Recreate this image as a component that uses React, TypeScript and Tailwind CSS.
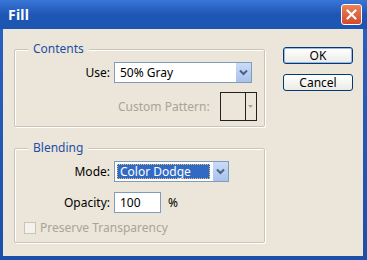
import React from "react";

const font = { fontFamily: "'Noto Sans', 'DejaVu Sans', sans-serif" };

function Chevron() {
  return (
    <svg width="9" height="7" viewBox="0 0 9 7">
      <path d="M1 1.5 L4.5 5 L8 1.5" stroke="#4d6185" strokeWidth="2" fill="none" />
    </svg>
  );
}

function DropBtn() {
  return (
    <div className="w-[16px] h-full flex items-center justify-center bg-gradient-to-b from-[#c9dbf7] to-[#a9c2ec] border-l border-white">
      <Chevron />
    </div>
  );
}

export default function App() {
  return (
    <div
      className="w-[367px] h-[260px] flex flex-col bg-gradient-to-b from-[#2a62c4] to-[#1d4fa8] overflow-hidden text-[12px] text-black"
      style={font}
    >
      {/* Title bar */}
      <div className="h-[29px] flex items-center justify-between pl-[8px] pr-[5px] bg-gradient-to-b from-[#3a76d8] via-[#1e56b4] to-[#1c55b2]">
        <span className="text-white font-bold text-[14px] leading-none tracking-[0.2px]">Fill</span>
        <div className="w-[21px] h-[21px] rounded-[3px] border border-white bg-gradient-to-b from-[#e8835a] to-[#d4472a] flex items-center justify-center">
          <svg width="11" height="11" viewBox="0 0 11 11">
            <path d="M1.5 1.5 L9.5 9.5 M9.5 1.5 L1.5 9.5" stroke="white" strokeWidth="2.2" strokeLinecap="round" />
          </svg>
        </div>
      </div>

      {/* Body */}
      <div className="flex-1 ml-[3px] mr-[4px] mb-[4px] bg-[#ebe6d9] flex pl-[11px] pt-[20px]">
        {/* Left column */}
        <div className="w-[251px] flex flex-col">
          {/* Contents group */}
          <div className="relative h-[78px] border border-[#c9c5b8] shadow-[inset_1px_1px_0_#fff,1px_1px_0_#fff] rounded-[2px]">
            <span className="absolute -top-[9px] left-[13px] px-[5px] bg-[#ebe6d9] text-[#1f4ea6] leading-[16px]">Contents</span>
            <div className="flex items-center mt-[12px]">
              <span className="w-[99px] text-right pr-[4px] leading-none">Use:</span>
              <div className="w-[138px] h-[21px] border border-[#7f9db9] bg-white flex items-center">
                <span className="flex-1 pl-[5px] leading-none">50% Gray</span>
                <DropBtn />
              </div>
            </div>
            <div className="flex items-center mt-[9px] ml-[103px]">
              <span className="text-[#a8a499] leading-none">Custom Pattern:</span>
              <div className="ml-[10px] w-[37px] h-[29px] border border-[#222] flex">
                <div className="flex-1" />
                <div className="w-[11px] border-l border-[#222] flex items-center justify-center">
                  <svg width="5" height="3" viewBox="0 0 5 3"><path d="M0 0 L5 0 L2.5 3 Z" fill="#a8a499" /></svg>
                </div>
              </div>
            </div>
          </div>

          {/* Blending group */}
          <div className="relative mt-[21px] h-[95px] border border-[#c9c5b8] shadow-[inset_1px_1px_0_#fff,1px_1px_0_#fff] rounded-[2px]">
            <span className="absolute -top-[9px] left-[13px] px-[5px] bg-[#ebe6d9] text-[#1f4ea6] leading-[16px]">Blending</span>
            <div className="flex items-center mt-[12px]">
              <span className="w-[99px] text-right pr-[4px] leading-none">Mode:</span>
              <div className="w-[115px] h-[21px] border border-[#7f9db9] bg-white flex items-center">
                <div className="flex-1 h-full p-[2px]">
                  <div className="h-full bg-[#316ac5] outline-1 outline-dotted outline-[#f0c070] -outline-offset-1 text-white flex items-center pl-[3px] leading-none">
                    Color Dodge
                  </div>
                </div>
                <DropBtn />
              </div>
            </div>
            <div className="flex items-center mt-[10px]">
              <span className="w-[99px] text-right pr-[4px] leading-none">Opacity:</span>
              <div className="w-[47px] h-[21px] border border-[#7f9db9] bg-white flex items-center pl-[5px] leading-none">100</div>
              <span className="ml-[7px] leading-none">%</span>
            </div>
            <div className="flex items-center mt-[9px] ml-[9px]">
              <div className="w-[12px] h-[12px] border border-[#c8c4b8] bg-[#f4f2ea]" />
              <span className="ml-[4px] text-[#a8a499] leading-none">Preserve Transparency</span>
            </div>
          </div>
        </div>

        {/* Buttons */}
        <div className="ml-[18px] w-[70px] flex flex-col pt-[-2px] -mt-[2px]">
          <div className="h-[17px] rounded-[3px] border border-[#003c74] shadow-[inset_0_0_0_1px_#9db7e8] bg-gradient-to-b from-white to-[#ecebe6] flex items-center justify-center leading-none">
            OK
          </div>
          <div className="mt-[10px] h-[17px] rounded-[3px] border border-[#003c74] bg-gradient-to-b from-white to-[#ecebe6] flex items-center justify-center leading-none">
            Cancel
          </div>
        </div>
      </div>
    </div>
  );
}
